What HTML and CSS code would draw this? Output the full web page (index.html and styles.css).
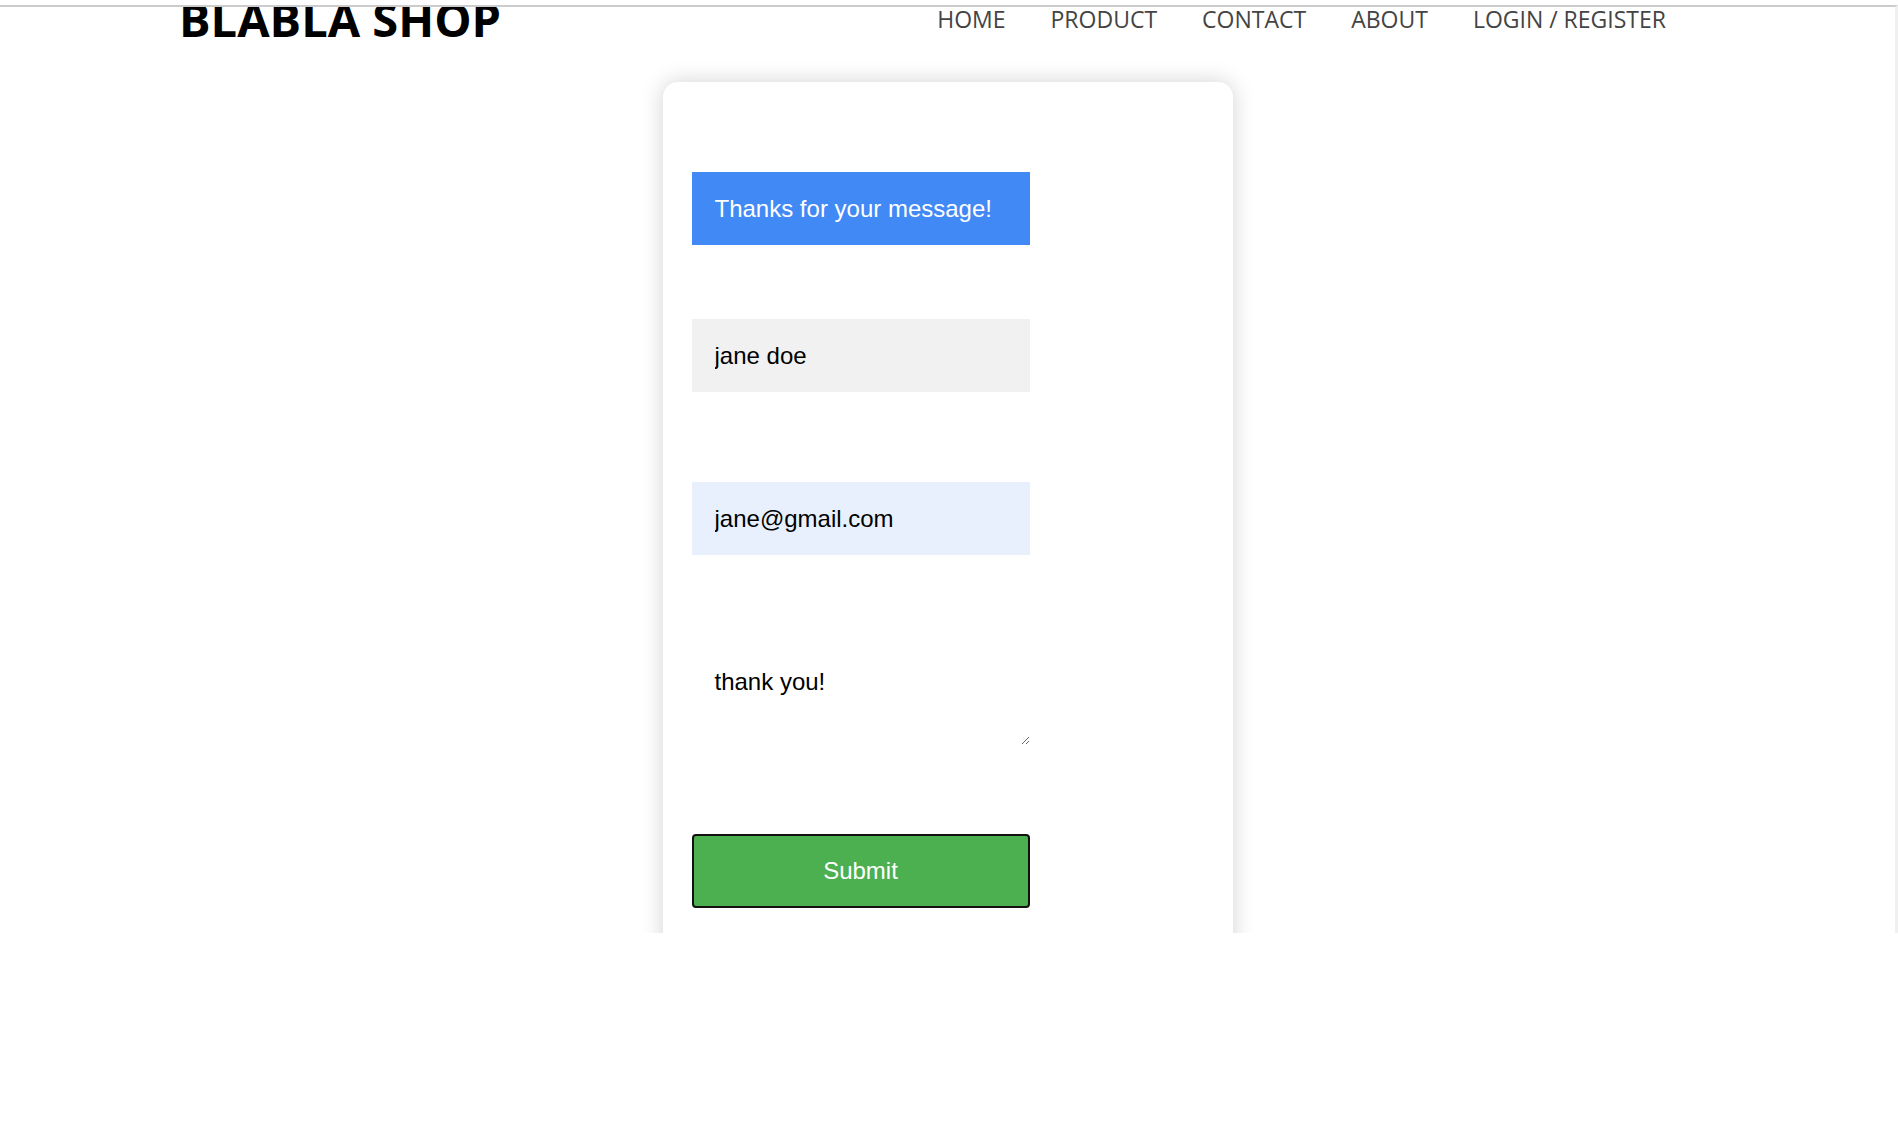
FILE: index.html
```html
<!DOCTYPE html>
<html>
<head>
<meta charset="utf-8">
<title>BLABLA SHOP - Contact</title>
<link rel="stylesheet" href="styles.css">
</head>
<body>
<div class="viewport">
  <header class="header">
    <div class="logo">BLABLA SHOP</div>
    <nav class="nav">
      <a href="#">HOME</a>
      <a href="#">PRODUCT</a>
      <a href="#">CONTACT</a>
      <a href="#">ABOUT</a>
      <a href="#">LOGIN / REGISTER</a>
    </nav>
  </header>
  <main class="card">
    <div class="notice">Thanks for your message!</div>
    <input class="field field-name" type="text" value="jane doe">
    <input class="field field-email" type="email" value="jane@gmail.com">
    <textarea class="field field-msg">thank you!</textarea>
    <button class="submit" type="button">Submit</button>
  </main>
</div>
</body>
</html>
```
FILE: styles.css
```css
html, body {
  margin: 0;
  padding: 0;
  background: #ffffff;
}

body {
  padding-top: 5px;
}

.viewport {
  height: 926px;
  overflow: hidden;
  border-top: 2px solid #cccccc;
  border-right: 3px solid #f0f0f0;
  display: flex;
  flex-direction: column;
  align-items: center;
}

.header {
  align-self: stretch;
  flex-shrink: 0;
  display: flex;
  align-items: flex-start;
  justify-content: space-between;
  height: 75px;
  padding: 0 229px 0 179px;
}

.logo {
  font-family: "Open Sans", sans-serif;
  font-weight: 700;
  font-size: 47px;
  line-height: 1;
  margin-top: -11px;
  color: #000000;
}

.nav {
  display: flex;
  gap: 45px;
  margin-top: 0;
}

.nav a {
  font-family: "Open Sans", sans-serif;
  font-size: 23px;
  line-height: 25px;
  color: #444444;
  text-decoration: none;
}

.card {
  width: 570px;
  box-sizing: border-box;
  flex-shrink: 0;
  background: #ffffff;
  border-radius: 15px;
  box-shadow: 0 0 22px rgba(0, 0, 0, 0.18);
  padding: 90px 203px 120px 29px;
  display: flex;
  flex-direction: column;
  height: 1000px;
}

.notice {
  width: 338px;
  height: 73px;
  box-sizing: border-box;
  background: #4189f5;
  color: #ffffff;
  font-family: "Liberation Sans", Arial, sans-serif;
  font-size: 24px;
  display: flex;
  align-items: center;
  padding: 0 23px;
  margin-bottom: 74px;
}

.field {
  width: 338px;
  box-sizing: border-box;
  border: none;
  outline: none;
  margin: 0 0 90px 0;
  font-family: "Liberation Sans", Arial, sans-serif;
  font-size: 24px;
  color: #000000;
  padding: 0 23px;
  display: block;
}

.field-name {
  height: 73px;
  background: #f1f1f1;
}

.field-email {
  height: 73px;
  background: #e8f0fe;
}

.field-msg {
  height: 100px;
  background: #ffffff;
  padding-top: 23px;
  line-height: 27px;
  resize: vertical;
  margin-bottom: 89px;
}

.submit {
  width: 338px;
  height: 74px;
  box-sizing: border-box;
  background: #4caf50;
  border: 2px solid #111111;
  border-radius: 4px;
  color: #ffffff;
  font-family: "Liberation Sans", Arial, sans-serif;
  font-size: 24px;
  cursor: pointer;
}
```
